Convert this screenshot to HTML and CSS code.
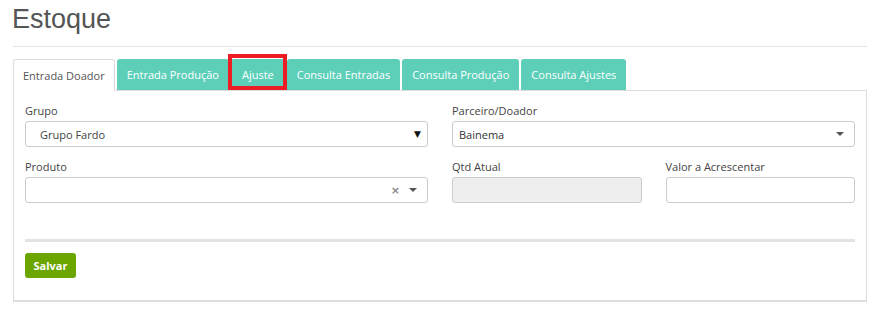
FILE: index.html
```html
<!DOCTYPE html>
<html lang="pt-BR">
<head>
  <meta charset="UTF-8">
  <title>Estoque</title>
  <link rel="stylesheet" href="styles.css">
</head>
<body>
  <div class="page">
    <h1>Estoque</h1>
    <hr class="title-line">

    <ul class="tabs">
      <li class="tab active">Entrada Doador</li>
      <li class="tab">Entrada Produção</li>
      <li class="tab marked">Ajuste</li>
      <li class="tab">Consulta Entradas</li>
      <li class="tab">Consulta Produção</li>
      <li class="tab">Consulta Ajustes</li>
    </ul>

    <div class="panel">
      <div class="row">
        <div class="field">
          <label>Grupo</label>
          <div class="select native">
            <span class="value">Grupo Fardo</span>
            <span class="arrow-solid">&#9660;</span>
          </div>
        </div>
        <div class="field">
          <label>Parceiro/Doador</label>
          <div class="select">
            <span class="value plain">Bainema</span>
            <span class="caret"></span>
          </div>
        </div>
      </div>

      <div class="row">
        <div class="field">
          <label>Produto</label>
          <div class="select">
            <span class="value"></span>
            <span class="clear">&times;</span>
            <span class="caret"></span>
          </div>
        </div>
        <div class="field split">
          <div class="field">
            <label>Qtd Atual</label>
            <div class="input disabled"></div>
          </div>
          <div class="field">
            <label>Valor a Acrescentar</label>
            <div class="input"></div>
          </div>
        </div>
      </div>

      <hr class="sep">
      <button class="btn-save">Salvar</button>
    </div>
  </div>
</body>
</html>
```

FILE: styles.css
```css
* {
  margin: 0;
  padding: 0;
  box-sizing: border-box;
}

body {
  font-family: 'Open Sans', sans-serif;
  font-size: 11px;
  color: #333;
  background: #fff;
}

.page {
  padding: 0 16px 0 13px;
}

h1 {
  font-family: 'Liberation Sans', Arial, sans-serif;
  font-weight: normal;
  font-size: 27px;
  color: #555;
  line-height: 30px;
  padding-top: 4px;
  margin-left: -1px;
}

.title-line {
  border: none;
  border-top: 1px solid #e6e6e6;
  margin-top: 12px;
}

.tabs {
  list-style: none;
  display: flex;
  margin-top: 11px;
  height: 32px;
  align-items: flex-end;
}

.tab {
  height: 31px;
  line-height: 31px;
  padding: 0 10px;
  margin-right: 2px;
  background: #5dcfb9;
  color: #fff;
  border-radius: 3px 3px 0 0;
  white-space: nowrap;
}

.tab.active {
  background: #fff;
  color: #555;
  border: 1px solid #ddd;
  border-bottom: none;
  height: 32px;
  padding: 0 9px;
  position: relative;
  top: 1px;
}

/* red annotation frame around the "Ajuste" tab */
.tab.marked {
  position: relative;
  padding: 0 11px;
}

.tab.marked::after {
  content: "";
  position: absolute;
  left: -3px;
  right: -2px;
  top: -5px;
  bottom: 0;
  border: 4px solid #ee1c25;
}

.panel {
  border: 1px solid #ddd;
  border-bottom: 2px solid #ddd;
  padding: 12px 11px 0 11px;
  height: 212px;
}

.row {
  display: flex;
  gap: 24px;
  margin-bottom: 12px;
}

.row + .row {
  margin-bottom: 0;
}

.field {
  flex: 1;
  display: flex;
  flex-direction: column;
}

.field.split {
  flex-direction: row;
  gap: 24px;
}

label {
  color: #444;
  line-height: 15px;
  margin-bottom: 3px;
}

.select,
.input {
  height: 26px;
  border: 1px solid #ccc;
  border-radius: 3px;
  display: flex;
  align-items: center;
  background: #fff;
}

.input.disabled {
  background: #eee;
}

.select .value {
  flex: 1;
  padding-left: 14px;
  color: #444;
}

.select .value.plain {
  padding-left: 6px;
  color: #333;
}

.arrow-solid {
  font-family: 'DejaVu Sans', sans-serif;
  font-size: 9px;
  color: #111;
  margin-right: 6px;
}

.caret {
  width: 0;
  height: 0;
  border-left: 4px solid transparent;
  border-right: 4px solid transparent;
  border-top: 4px solid #555;
  margin-right: 10px;
}

.clear {
  font-family: 'DejaVu Sans', sans-serif;
  color: #888;
  font-size: 11px;
  font-weight: bold;
  margin-right: 9px;
  line-height: 1;
}

.sep {
  border: none;
  border-top: 3px solid #e3e3e3;
  margin-top: 36px;
}

.btn-save {
  margin-top: 11px;
  font-family: 'Open Sans', sans-serif;
  font-size: 11px;
  font-weight: bold;
  color: #fff;
  background: #6ba500;
  border: none;
  border-radius: 3px;
  height: 25px;
  width: 51px;
}
```
